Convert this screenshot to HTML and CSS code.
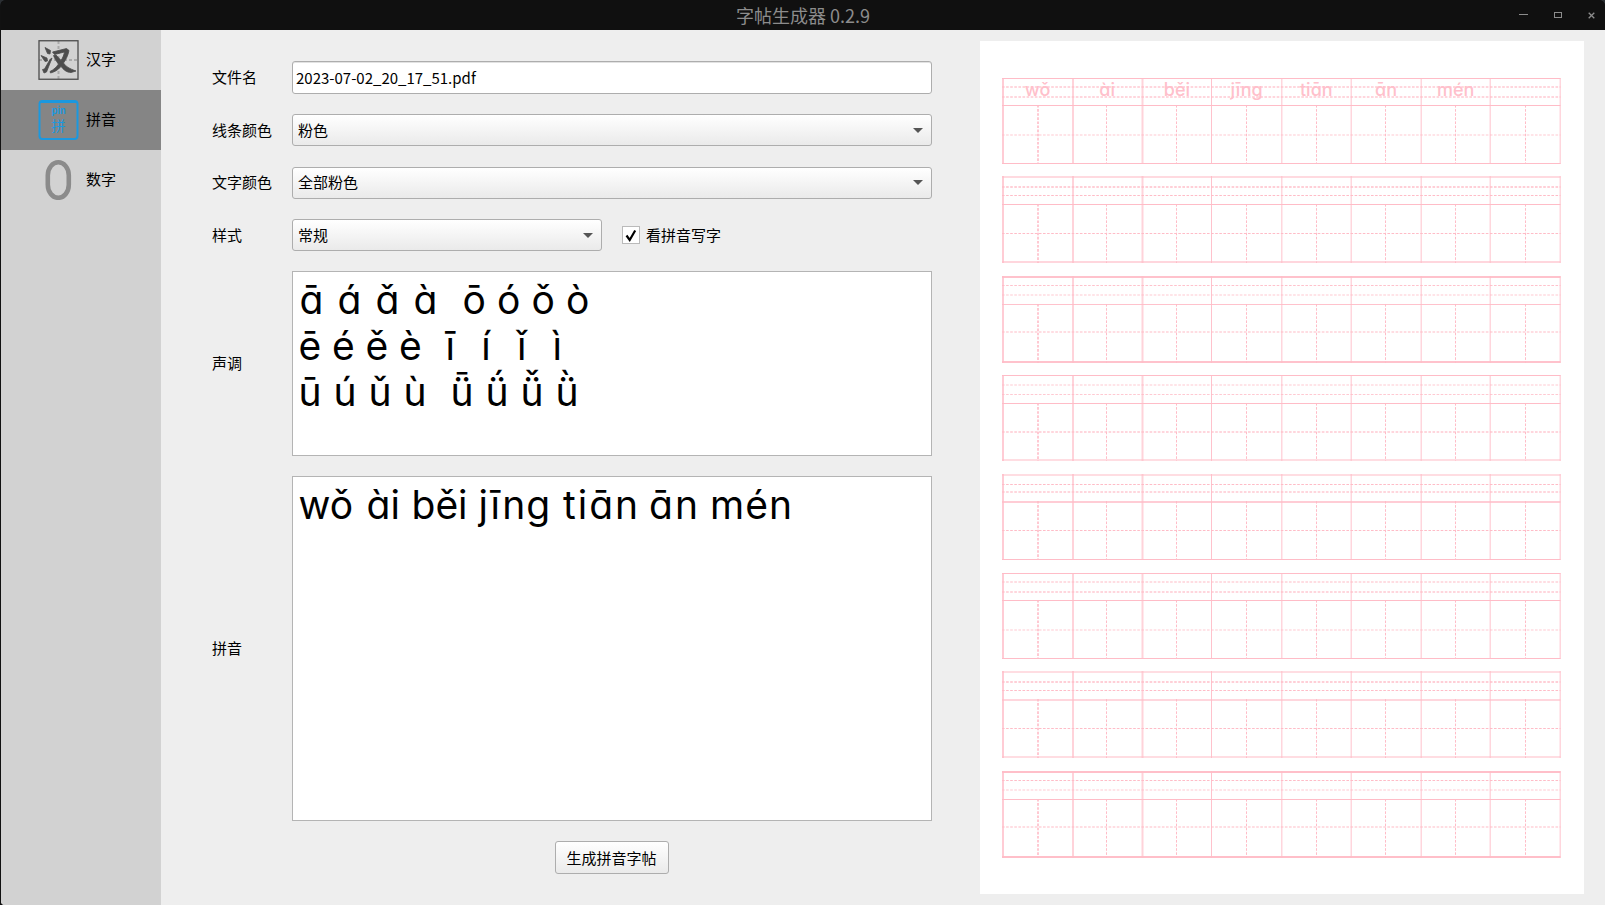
FILE: index.html
```html
<!DOCTYPE html>
<html lang="zh-CN">
<head>
<meta charset="utf-8">
<title>字帖生成器 0.2.9</title>
<link rel="stylesheet" href="styles.css">
</head>
<body>
<div class="window">
  <header class="titlebar">
    <h1 class="title">字帖生成器 0.2.9</h1>
    <div class="controls">
      <svg width="9" height="9" viewBox="0 0 9 9"><path d="M0 3.5H9" stroke="#8c8c8c"/></svg>
      <svg width="8" height="9" viewBox="0 0 8 9"><rect x=".5" y="1.5" width="7" height="5" fill="none" stroke="#8c8c8c"/></svg>
      <svg width="7" height="9" viewBox="0 0 7 9"><path d="M.7 1.700L6.3 7.300M6.3 1.700L.7 7.300" stroke="#8c8c8c" stroke-width="1.3"/></svg>
    </div>
  </header>
  <div class="body">
    <nav class="sidebar">
      <div class="tab">
        <svg class="icon" viewBox="0 0 41 40"><path d="M20.500 1V39M1 20H40" fill="none" stroke="#aaa" stroke-width="2" stroke-dasharray="3 2"/><rect x="1" y=".75" width="39" height="38.500" fill="none" stroke="#4d4d4d" stroke-width="1.300"/><path fill="#4d4d4d" stroke="#4d4d4d" stroke-width=".8" stroke-linejoin="round" d="M7 7.500L12.500 10.500L12 14L9.500 13.500ZM3 15.500L9 18L9.500 21L7 21.500ZM4.500 29.500L6.500 29L12 19.500L14 18L8.500 32L6 33ZM14.500 12L28.500 8.500L31 10.500C30 16 27.500 20 25.500 23C28 26.500 31 28.500 38 31L33 32.500C28.500 32.500 25.500 29.500 23 26.500C20 30 16.500 32 12.500 33L12 31.500C16 29.500 18.500 27 20.500 24C18 21 16.500 18 15.500 15.500L18 15L23 20.500C25 17.500 26 14.500 26.500 12L16.500 14.500Z"/></svg>
        <span>汉字</span>
      </div>
      <div class="tab active">
        <svg class="icon" viewBox="0 0 41 40"><rect x="1.500" y="1" width="38" height="38" rx="3" fill="none" stroke="#1b98df" stroke-width="2"/><path d="M3 2H38" stroke="#1b98df" stroke-width="2"/><text x="13.500" y="14" class="mini-latin">pin</text><text x="13.500" y="31" class="mini-han">拼</text></svg>
        <span>拼音</span>
      </div>
      <div class="tab">
        <svg class="icon" viewBox="0 0 41 40"><rect x="9.800" y="2.300" width="21" height="35.500" rx="10.500" ry="13" fill="none" stroke="#8b8b8b" stroke-width="4.600"/></svg>
        <span>数字</span>
      </div>
    </nav>
    <main class="form">
      <label class="label">文件名</label>
      <div class="field input">2023-07-02_20_17_51.pdf</div>
      <label class="label">线条颜色</label>
      <div class="field combo"><span>粉色</span><i class="arrow"></i></div>
      <label class="label">文字颜色</label>
      <div class="field combo"><span>全部粉色</span><i class="arrow"></i></div>
      <label class="label">样式</label>
      <div class="pair">
        <div class="field combo short"><span>常规</span><i class="arrow"></i></div>
        <div class="check"><svg class="box" viewBox="0 0 18 18"><rect x=".5" y=".5" width="17" height="17" fill="#fff" stroke="#bababa"/><path d="M4.500 9.500L7.700 14L13.200 4.500" fill="none" stroke="#000" stroke-width="2.200"/></svg><span>看拼音写字</span></div>
      </div>
      <label class="label">声调</label>
      <div class="area tones">
        <div class="line first"><span class="a">ā</span><span class="a">á</span><span class="a">ǎ</span><span class="a last">à</span><span class="o">ō</span><span class="o">ó</span><span class="o">ǒ</span><span class="o">ò</span></div>
        <div class="line"><span class="e">ē</span><span class="e">é</span><span class="e">ě</span><span class="e last">è</span><span class="i">ī</span><span class="i">í</span><span class="i">ǐ</span><span class="i">ì</span></div>
        <div class="line"><span class="u">ū</span><span class="u">ú</span><span class="u">ǔ</span><span class="u last">ù</span><span class="u">ǖ</span><span class="u">ǘ</span><span class="u">ǚ</span><span class="u">ǜ</span></div>
      </div>
      <label class="label">拼音</label>
      <div class="area words">
        <div class="line"><span class="w1">wǒ</span><span class="w2">ài</span><span class="w3">běi</span><span class="w4">jīng</span><span class="w5">tiān</span><span class="w6">ān</span><span class="w7">mén</span></div>
      </div>
      <div class="actions"><button class="generate">生成拼音字帖</button></div>
    </main>
    <section class="preview"><svg id="sheet" width="604" height="853" viewBox="980 41 604 853"></svg></section>
  </div>
</div>
<script src="sheet.js"></script>
</body>
</html>
```
FILE: styles.css
```css
* { box-sizing: border-box; }
body {
  margin: 0;
  background: #2b2f33;
  color: #000;
  font: 15px/22px "Noto Sans CJK SC", sans-serif;
}
.window {
  display: flex;
  flex-direction: column;
  width: 1605px;
  height: 905px;
  padding-left: 1px;
  border-radius: 6px 6px 0 0;
  overflow: hidden;
  background: #111;
}
.titlebar {
  display: grid;
  grid-template-columns: 1fr auto 1fr;
  align-items: center;
  height: 30px;
  background: #101010;
}
.title {
  grid-column: 2;
  margin: 0;
  font-size: 18px;
  font-weight: 400;
  line-height: 26px;
  color: #8c8c8c;
}
.controls {
  display: flex;
  justify-content: flex-end;
  gap: 26px;
  padding-right: 10px;
}
.body {
  display: flex;
  flex: 1;
  background: #eee;
  border-radius: 0 0 0 4px;
  overflow: hidden;
}
.sidebar { width: 160px; background: #d2d2d2; }
.tab {
  display: flex;
  align-items: center;
  gap: 7px;
  height: 60px;
  padding-left: 37px;
}
.tab span { padding-bottom: 2px; }
.active { background: #858585; }
.icon { width: 41px; height: 40px; }
.mini-latin { font: 700 9px "Noto Sans CJK SC", sans-serif; fill: #1b98df; }
.mini-han { font: 14px "Noto Sans CJK SC", sans-serif; fill: #1b98df; }
.form {
  display: grid;
  grid-template-columns: 80px 640px;
  grid-template-rows: 33px 32px 33px 32px 185px 345px 33px;
  row-gap: 20px;
  align-items: center;
  align-content: start;
  width: 771px;
  padding: 31px 0 0 51px;
}
.label { padding-bottom: 1px; }
.field {
  display: flex;
  align-items: center;
  height: 32px;
  border: 1px solid #adadad;
  border-radius: 3px;
}
.input { height: 33px; padding-left: 3px; background: #fff; box-shadow: inset 0 1px #e2e2e2; }
.combo {
  justify-content: space-between;
  padding: 0 8px 0 5px;
  background: linear-gradient(#fff, #eaeaea);
}
.combo span { padding-bottom: 1px; }
.short { width: 310px; }
.arrow {
  border: 5px solid transparent;
  border-top-color: #555;
  border-bottom: 0;
}
.pair { display: flex; align-items: center; gap: 20px; }
.check { display: flex; align-items: center; gap: 6px; }
.box { width: 18px; height: 18px; }
.area {
  height: 100%;
  padding: 5px 5.500px;
  border: 1px solid #b4b4b4;
  background: #fff;
  font: 400 39px/46px Inter, sans-serif;
  font-feature-settings: "cv11";
}
.line { display: flex; height: 46px; white-space: pre; }
.first { padding-left: 1px; }
.line span { flex: none; }
.a { width: 38px; }
.a.last { width: 49px; }
.o { width: 34.500px; }
.e { width: 33.500px; }
.e.last { width: 46.500px; }
.i { width: 35.700px; }
.u { width: 35px; }
.u.last { width: 47px; }
.w1 { width: 68px; }
.w2 { width: 45px; }
.w3 { width: 67px; }
.w4 { width: 84.500px; letter-spacing: 1px; }
.w5 { width: 86px; letter-spacing: 2px; }
.w6 { width: 61px; letter-spacing: 2px; }
.w7 { letter-spacing: 1px; }
.actions { grid-column: 1 / 3; display: flex; justify-content: center; padding-left: 80px; }
.generate {
  width: 114px;
  height: 33px;
  padding: 0 1px 0 0;
  border: 1px solid #adadad;
  border-radius: 3px;
  background: linear-gradient(#fff, #eaeaea);
  color: #000;
  font: inherit;
}
.preview { width: 604px; height: 853px; margin: 11px 0 0 48px; background: #fff; }
.preview svg { display: block; }
.preview text {
  font: 500 18px Inter, sans-serif;
  font-feature-settings: "cv11";
  fill: #ffc0cb;
  text-anchor: middle;
}
```
FILE: sheet.js
```js
// Practice sheet: 8 bands of 8 cells. Each rule is [offset, thickness, opacity].
const bands = [
  [[78, 1, 1], [86, 2, .6], [96, 2, .6], [105, 1, 1], [134, 2, .4], [163, 1, 1]],
  [[176, 2, .55], [186, 2, .7], [195, 1, 1], [204, 1, 1], [233, 1, 1], [261, 2, .6]],
  [[276, 2, .9], [285, 1, .9], [294, 2, .4], [304, 1, .9], [331, 2, .5], [361, 2, .9]],
  [[375, 1, 1], [384, 2, .4], [394, 1, .8], [403, 1, 1], [431, 2, .6], [459, 2, .5]],
  [[474, 2, .5], [484, 1, 1], [491, 2, .6], [501, 2, .75], [530, 1, 1], [559, 1, 1]],
  [[573, 1, 1], [581, 2, .5], [591, 2, .6], [600, 1, 1], [629, 2, .4], [658, 1, 1]],
  [[671, 2, .5], [681, 2, .7], [690, 1, 1], [699, 2, .6], [728, 1, 1], [756, 2, .5]],
  [[771, 2, .95], [780, 1, 1], [789, 2, .4], [799, 1, 1], [826, 2, .5], [856, 2, .95]]
];
const columns = [[1002, 2, .75], [1072, 2, .65], [1141.5, 2, .65], [1211, 1, .9], [1281, 1.5, .6], [1350.5, 1.5, .6], [1420.5, 1.5, .6], [1489.5, 1.5, .6], [1559.5, 1.5, .6]];
const centres = [[1037, 2, .8], [1106, 1, 1], [1176, 1, 1], [1246, 1, 1], [1316, 1, 1], [1385, 1, 1], [1455, 1, 1], [1525, 1, 1]];
const words = ['wǒ', 'ài', 'běi', 'jīng', 'tiān', 'ān', 'mén'];

const rule = (d, width, opacity, dashed) =>
  `<path d="${d}" stroke="#ffbcc7" stroke-width="${width}" opacity="${opacity}"${dashed ? ' stroke-dasharray="2.600 1.500"' : ''}/>`;

let out = '';
for (const lines of bands) {
  lines.forEach(([y, h, o], i) => {
    out += rule(`M1002 ${y + h / 2}H1560.500`, h, o, i === 1 || i === 2 || i === 4);
  });
  const top = lines[0][0], mid = lines[3][0], bottom = lines[5][0] + lines[5][1];
  columns.forEach(([x, w, o]) => { out += rule(`M${x + w / 2} ${top}V${bottom}`, w, o); });
  centres.forEach(([x, w, o]) => { out += rule(`M${x + w / 2} ${mid}V${bottom}`, w, o, true); });
}
words.forEach((word, i) => { out += `<text x="${1037.5 + i * 69.7}" y="96">${word}</text>`; });
document.getElementById('sheet').innerHTML = out;
```
